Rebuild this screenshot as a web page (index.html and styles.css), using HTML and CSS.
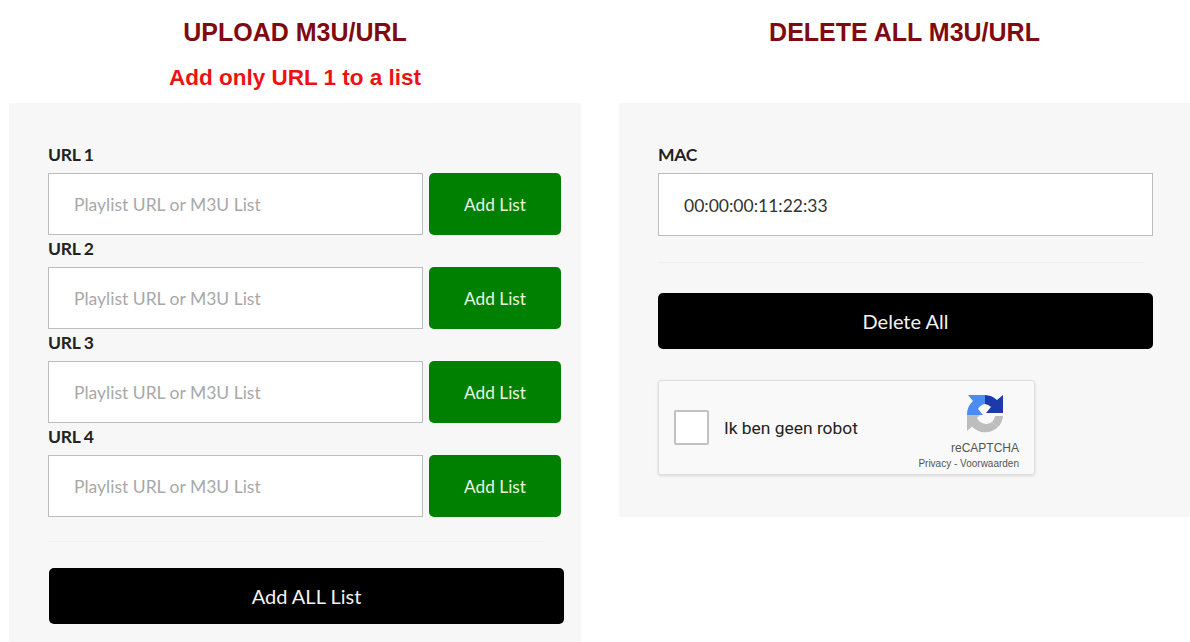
FILE: index.html
```html
<!DOCTYPE html>
<html lang="en">
<head>
<meta charset="utf-8">
<title>M3U/URL</title>
<link rel="stylesheet" href="styles.css">
</head>
<body>
<main class="page">
  <section class="col">
    <header class="head">
      <h1 class="title">UPLOAD M3U/URL</h1>
      <h2 class="sub">Add only URL 1 to a list</h2>
    </header>
    <form class="panel panel-left">
      <label class="label">URL 1</label>
      <div class="row"><input class="field field-url" placeholder="Playlist URL or M3U List"><button type="button" class="add">Add List</button></div>
      <label class="label">URL 2</label>
      <div class="row"><input class="field field-url" placeholder="Playlist URL or M3U List"><button type="button" class="add">Add List</button></div>
      <label class="label">URL 3</label>
      <div class="row"><input class="field field-url" placeholder="Playlist URL or M3U List"><button type="button" class="add">Add List</button></div>
      <label class="label">URL 4</label>
      <div class="row"><input class="field field-url" placeholder="Playlist URL or M3U List"><button type="button" class="add">Add List</button></div>
      <hr class="rule rule-left">
      <button type="button" class="black black-left">Add ALL List</button>
    </form>
  </section>
  <section class="col">
    <header class="head">
      <h1 class="title">DELETE ALL M3U/URL</h1>
    </header>
    <form class="panel panel-right">
      <label class="label">MAC</label>
      <input class="field field-mac" value="00:00:00:11:22:33">
      <hr class="rule rule-right">
      <button type="button" class="black black-right">Delete All</button>
      <div class="captcha">
        <span class="check"></span>
        <span class="robot">Ik ben geen robot</span>
        <div class="brand">
          <svg class="logo" viewBox="0 0 40 40" width="40" height="40" aria-hidden="true">
            <path fill="#bdbdbd" d="M2 20 L16 20 L12 24 A10 10 0 0 0 27 28 L33 33 A18 18 0 0 1 7 32.500 L2 37 Z"/>
            <path fill="#bdbdbd" d="M27 28 A10 10 0 0 0 30 22 L38 22 A18 18 0 0 1 33 33 Z"/>
            <path fill="#4a8cf0" d="M2 21 A18 18 0 0 1 8 7 L3 1 L20 1 L20 10 A10 10 0 0 0 13 15 L18 21 Z"/>
            <path fill="#1c3aa9" d="M20 1 A18 18 0 0 1 32 6 L38 1 L38 19 L21 19 L26 13 A10 10 0 0 0 20 10 Z"/>
          </svg>
          <span class="brand-name">reCAPTCHA</span>
          <span class="brand-links">Privacy - Voorwaarden</span>
        </div>
      </div>
    </form>
  </section>
</main>
</body>
</html>
```

FILE: styles.css
```css
* { box-sizing: border-box; }
html, body { margin: 0; height: 100%; background: #fff; overflow: hidden; }
body { font-family: Lato, "Liberation Sans", sans-serif; color: #222; }
.page {
  display: grid;
  grid-template-columns: 572px 571px;
  column-gap: 38px;
  padding-left: 9px;
  align-items: start;
  height: 642px;
}
.head { height: 103px; padding-top: 17px; text-align: center; font-family: "Liberation Sans", Arial, sans-serif; }
.title { margin: 0; font-size: 25px; line-height: 30px; font-weight: 700; color: #7f0a10; }
.sub { margin: 17px 0 0; font-size: 22.500px; line-height: 28px; font-weight: 700; color: #ee1111; }
.panel { background: #f7f7f7; padding: 40px 0 0 39px; display: flex; flex-direction: column; align-items: flex-start; }
.panel-left { height: 539px; }
.panel-right { height: 414px; }
.label { display: block; height: 30px; font-size: 17.500px; font-weight: 700; line-height: 24px; letter-spacing: -0.3px; color: #222; }
.row { display: flex; gap: 6px; height: 62px; margin-bottom: 2px; }
.field {
  display: block; height: 62px; padding: 1px 25px 0; margin: 0;
  background: #fff; border: 1.500px solid #bcbcbc; border-radius: 0;
  font: 400 17.500px Lato, sans-serif; color: #333; outline: none;
}
.field::placeholder { color: #a8a8a8; opacity: 1; }
.field-url { width: 375px; }
.field-mac { width: 495px; height: 63px; }
.add {
  width: 132px; height: 62px; padding: 1px 0 0; border: 0; border-radius: 5px;
  background: #008000; color: #e8f5e0; font: 400 17.300px Lato, sans-serif;
}
.rule { height: 1px; border: 0; margin: 0; background: #f0f0f0; }
.rule-left { width: 497px; margin-top: 22px; }
.rule-right { width: 485px; margin: 26px 0 0; }
.black {
  height: 56px; padding: 0; border: 0; border-radius: 5px;
  background: #000; color: #f2f2f2; font: 400 20px Lato, sans-serif;
}
.black-left { width: 515px; margin: 26px 0 0 1px; }
.black-right { width: 495px; margin-top: 30px; }
.captcha {
  width: 377px; height: 95px; margin-top: 31px; padding: 0 15px;
  display: flex; align-items: center;
  background: #f9f9f9; border: 1px solid #dfdfdf; border-radius: 3px;
  box-shadow: 0 1px 3px rgba(0,0,0,.12);
}
.check { width: 35px; height: 35px; background: #fff; border: 2px solid #c1c1c1; border-radius: 2px; flex: none; }
.robot { margin-left: 15px; flex: 1; font: 400 17.400px Roboto, "Liberation Sans", sans-serif; color: #222; }
.brand { display: flex; flex-direction: column; align-items: flex-end; font-family: "Liberation Sans", Arial, sans-serif; color: #555; margin-top: 10px; }
.logo { margin: 0 14px 7px 0; }
.brand-name { font-size: 12px; line-height: 15px; }
.brand-links { font-size: 10px; line-height: 15px; white-space: nowrap; }
```
